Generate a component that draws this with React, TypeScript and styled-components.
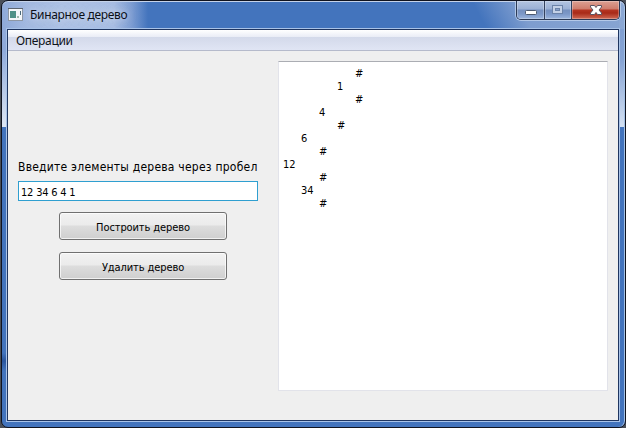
import React from "react";
import styled, { createGlobalStyle } from "styled-components";

const GlobalStyle = createGlobalStyle`
  * { box-sizing: border-box; }
  html, body { margin: 0; padding: 0; width: 626px; height: 428px; overflow: hidden; background: #4a4f58; }
`;

const ui = `"DejaVu Sans Condensed", "DejaVu Sans", sans-serif`;
const shell = `"Noto Sans", "Open Sans", sans-serif`;

const Frame = styled.div`
  width: 625px;
  height: 428px;
  margin-left: 1px;
  border: 1px solid #10131f;
  border-radius: 7px;
  overflow: hidden;
  padding: 0 5px 5px 4px;
  display: flex;
  flex-direction: column;
  background:
    linear-gradient(90deg, #8ea9d8 0, #a3b9e0 24px, #afc3e6 60px, #a9bee4 112px, #7c9cd2 130px, rgba(67, 114, 188, 0) 146px) 0 0 / 146px 28px no-repeat,
    linear-gradient(62deg, rgba(130, 160, 208, 0) 76%, rgba(136, 164, 210, 0.85) 83%, rgba(140, 168, 212, 0.95) 100%) 0 0 / 100% 28px no-repeat,
    linear-gradient(180deg, #92abda 0, #8faada 50px, #dde6f4 125px) 0 0 / 5px 126px no-repeat,
    linear-gradient(180deg, #7b9bd0 0, #87a4d4 60px, #d3e0f2 125px) 100% 0 / 6px 126px no-repeat,
    linear-gradient(180deg, rgba(36, 78, 150, 0), rgba(36, 78, 150, 0.8) 8px, rgba(36, 78, 150, 0) 18px) 0 352px / 5px 18px no-repeat,
    #4374bd;
  box-shadow: inset 0 1px #c5d3ea, inset -1px 0 #a5c2e6;
`;

const TitleBar = styled.header`
  height: 27px;
  flex: none;
  display: flex;
  align-items: flex-start;
  padding-left: 2px;
`;

const AppIcon = styled.svg`
  width: 15px;
  height: 13px;
  margin-top: 7px;
  flex: none;
`;

const Title = styled.h1`
  margin: 5px 0 0 7px;
  flex: 1;
  font: 400 12px/17px ${shell};
  letter-spacing: -0.32px;
  color: #0b0f18;
  white-space: nowrap;
  text-shadow: 0 0 7px rgba(226, 234, 248, 0.75), 0 0 10px rgba(220, 230, 246, 0.5);
`;

const Controls = styled.div`
  height: 19px;
  width: 104px;
  flex: none;
  display: flex;
  border: 1px solid #2b3a57;
  border-top: 0;
  border-radius: 0 0 5px 5px;
  overflow: hidden;
  box-shadow: 0 0 0 1px rgba(196, 213, 239, 0.75);
`;

const Control = styled.button<{ $w: number; $close?: boolean }>`
  width: ${(p) => p.$w}px;
  flex: none;
  height: 100%;
  padding: 0;
  border: 0;
  border-right: ${(p) => (p.$close ? "0" : "1px solid #33415e")};
  display: flex;
  justify-content: flex-start;
  background: ${(p) =>
    p.$close
      ? "linear-gradient(180deg, #dca093 0, #cf7c6c 8px, #b53522 9px, #a92a18 12px, #cf6a55 18px)"
      : "linear-gradient(180deg, #b3c4e1 0, #9bb0d5 8px, #7590bf 9px, #7c98c8 13px, #9db6de 18px)"};
  box-shadow: inset 0 0 0 1px rgba(255, 255, 255, 0.28);
`;

const Client = styled.main`
  flex: 1;
  min-height: 0;
  border: 1px solid #a9c3e8;
  background: #1f3560;
  padding: 1px;
  display: flex;
  flex-direction: column;
`;

const MenuBar = styled.nav`
  height: 21px;
  flex: none;
  padding-left: 8px;
  border-bottom: 1px solid #b5bacb;
  background: linear-gradient(180deg, #fff 0, #e9ecf6 7px, #d3d9ea 7px, #e0e5f4 20px);
  font: 400 12px/21px ${shell};
  letter-spacing: -0.32px;
  color: #10131a;
`;

const Body = styled.div`
  flex: 1;
  min-height: 0;
  display: flex;
  background: #efefef;
  padding: 10px 10px 29px;
  gap: 20px;
`;

const Form = styled.section`
  width: 240px;
  display: flex;
  flex-direction: column;
  padding-top: 97px;
`;

const Label = styled.label`
  height: 23px;
  padding-top: 1px;
  font: 400 12px/17px ${ui};
  letter-spacing: 0.23px;
  color: #000;
  white-space: nowrap;
`;

const Input = styled.input`
  width: 240px;
  height: 20px;
  margin-bottom: 11px;
  padding: 2px 2px 0;
  border: 1px solid #2f9fd0;
  border-radius: 0;
  outline: 0;
  background: #fff;
  font: 400 11px/16px ${ui};
  letter-spacing: -0.2px;
  color: #000;
`;

const Button = styled.button`
  width: 168px;
  height: 28px;
  margin: 0 0 12px 41px;
  padding: 3px 0 0;
  border: 1px solid #707070;
  border-radius: 3px;
  background: linear-gradient(180deg, #f2f2f2 0, #ebebeb 12px, #dddddd 13px, #cfcfcf 100%);
  box-shadow: inset 0 0 0 1px rgba(255, 255, 255, 0.7);
  font: 400 11px/14px ${ui};
  letter-spacing: -0.1px;
  color: #000;
`;

const Output = styled.section`
  flex: 1;
  background: #fff;
  border: 1px solid #e2e3ea;
  border-top-color: #abadb3;
  padding: 5px 4px;
  font: 400 11px/13px ${ui};
  color: #000;
`;

const Node = styled.div<{ $depth: number }>`
  height: 13px;
  padding-left: ${(p) => p.$depth * 18}px;
`;

const tree: [number, string][] = [
  [4, "#"], [3, "1"], [4, "#"], [2, "4"], [3, "#"], [1, "6"],
  [2, "#"], [0, "12"], [2, "#"], [1, "34"], [2, "#"],
];

export default function App() {
  return (
    <>
      <GlobalStyle />
      <Frame>
        <TitleBar>
          <AppIcon viewBox="0 0 15 13">
            <rect x=".5" y=".5" width="14" height="12" fill="#f5f7fa" stroke="#8e97a4" />
            <rect x="0" y="0" width="15" height="1" fill="#5d6570" />
            <rect x="2" y="3" width="6" height="7" fill="#4f9188" />
            <rect x="9" y="8" width="2" height="2" fill="#a0b8ac" />
            <rect x="12" y="3" width="1" height="4" fill="#4b6b7d" />
          </AppIcon>
          <Title>Бинарное дерево</Title>
          <Controls>
            <Control $w={28} aria-label="Свернуть">
              <svg width="27" height="18"><rect x="8.500" y="9.500" width="11" height="4" rx="1" fill="#fff" stroke="#4d5a70" /></svg>
            </Control>
            <Control $w={27} aria-label="Развернуть">
              <svg width="26" height="18" fill="none">
                <rect x="7.500" y="4.500" width="10" height="8" stroke="#6c83a9" />
                <rect x="9" y="6" width="7" height="5" stroke="#c3d0e6" strokeWidth="2" />
                <rect x="10.500" y="7.500" width="4" height="2" stroke="#6c83a9" />
              </svg>
            </Control>
            <Control $w={47} $close aria-label="Закрыть">
              <svg width="47" height="18">
                <path d="M18.500 4.500h4l1.500 2 1.500-2h4v1.500l-2.500 3 2.500 3v1.500h-4l-1.500-2-1.500 2h-4v-1.500l2.500-3-2.500-3z" fill="#fff" stroke="#5b5361" />
              </svg>
            </Control>
          </Controls>
        </TitleBar>
        <Client>
          <MenuBar>Операции</MenuBar>
          <Body>
            <Form>
              <Label htmlFor="items">Введите элементы дерева через пробел</Label>
              <Input id="items" defaultValue="12 34 6 4 1" />
              <Button>Построить дерево</Button>
              <Button>Удалить дерево</Button>
            </Form>
            <Output>
              {tree.map(([depth, value], i) => (
                <Node key={i} $depth={depth}>{value}</Node>
              ))}
            </Output>
          </Body>
        </Client>
      </Frame>
    </>
  );
}
